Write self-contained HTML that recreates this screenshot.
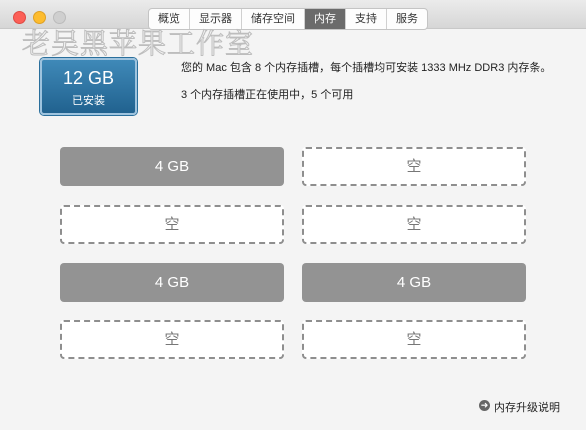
<html><head><style>
body{margin:0;width:586px;height:430px;background:#f4f4f4;font-family:"Liberation Sans","Noto Sans CJK SC",sans-serif;position:relative;overflow:hidden}
.tb{position:absolute;left:0;top:0;width:586px;height:28px;background:linear-gradient(#ebebeb,#d6d6d6);border-bottom:1px solid #c8c8c8}
.dot{position:absolute;top:11px;width:12px;height:12px;border-radius:50%}
.tabs{position:absolute;left:148px;top:8px;height:20px;display:flex;border:1px solid #c4c4c4;border-radius:4px;background:#fdfdfd;overflow:hidden}
.tabs div{font-size:11px;line-height:20px;padding:0 9px;border-left:1px solid #d0d0d0;color:#333}
.tabs div:first-child{border-left:none}
.tabs .on{background:#6b6b6b;color:#fff}
.wm{position:absolute;left:22px;top:22px;font-size:28px;letter-spacing:1px;color:#f4f4f4;-webkit-text-stroke:1px #bdbdbd;font-family:"Noto Serif CJK SC",serif}
.blue{position:absolute;left:40px;top:58px;width:93px;height:53px;border:2px solid #9ec3de;border-radius:4px;background:linear-gradient(#3f89b8,#21628f);color:#fff;text-align:center;box-shadow:0 0 0 1px #2a6f9c}
.t{position:absolute;font-size:11px;color:#222}
.s{position:absolute;width:224px;height:39px;border-radius:4px;box-sizing:border-box;text-align:center;line-height:39px;font-size:15px}
.f{background:#939393;color:#fff}
.e{border:2px dashed #8e8e8e;background:#fff;color:#777;line-height:35px}
</style></head><body>
<div class="tb"></div>
<div class="dot" style="left:13px;background:#fc5f57;border:1px solid #de4a43;width:11px;height:11px"></div>
<div class="dot" style="left:33px;background:#fdbc2e;border:1px solid #dea024;width:11px;height:11px"></div>
<div class="dot" style="left:53px;background:#cfcfcf;border:1px solid #bbb;width:11px;height:11px"></div>
<div class="tabs"><div>概览</div><div>显示器</div><div>储存空间</div><div class="on">内存</div><div>支持</div><div>服务</div></div>
<div class="wm">老吴黑苹果工作室</div>
<div class="blue"><div style="font-size:18px;margin-top:8px">12 GB</div><div style="font-size:11px;margin-top:3px">已安装</div></div>
<div class="t" style="left:181px;top:59px">您的 Mac 包含 8 个内存插槽，每个插槽均可安装 1333 MHz DDR3 内存条。</div>
<div class="t" style="left:181px;top:86px">3 个内存插槽正在使用中，5 个可用</div>
<div class="s f" style="left:60px;top:147px">4 GB</div>
<div class="s e" style="left:302px;top:147px">空</div>
<div class="s e" style="left:60px;top:205px">空</div>
<div class="s e" style="left:302px;top:205px">空</div>
<div class="s f" style="left:60px;top:263px">4 GB</div>
<div class="s f" style="left:302px;top:263px">4 GB</div>
<div class="s e" style="left:60px;top:320px">空</div>
<div class="s e" style="left:302px;top:320px">空</div>
<div style="position:absolute;left:479px;top:400px;width:11px;height:11px;border-radius:50%;background:#666;color:#fff;font-size:9px;line-height:11px;text-align:center">➜</div>
<div class="t" style="left:494px;top:399px">内存升级说明</div>
</body></html>
